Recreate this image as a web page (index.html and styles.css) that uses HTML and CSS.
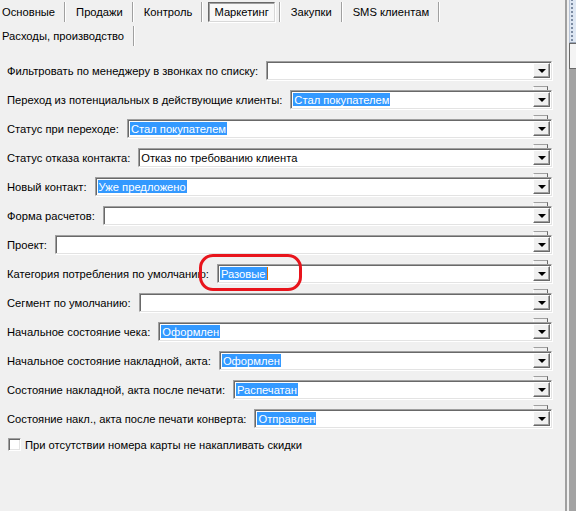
FILE: index.html
```html
<!DOCTYPE html>
<html lang="ru">
<head>
<meta charset="utf-8">
<title>Маркетинг</title>
<link rel="stylesheet" href="styles.css">
</head>
<body>
<div class="window">
  <div class="main">
    <div class="tabrow">
      <div class="tab first">Основные</div>
      <div class="tab">Продажи</div>
      <div class="tab">Контроль</div>
      <div class="tab active"><span class="tabbox">Маркетинг</span></div>
      <div class="tab">Закупки</div>
      <div class="tab">SMS клиентам</div>
    </div>
    <div class="tabrow">
      <div class="tab first">Расходы, производство</div>
    </div>

    <div class="form">
      <div class="row"><span class="label">Фильтровать по менеджеру в звонках по списку:</span><div class="combo nocap"><span class="val"></span><span class="btn"></span></div></div>
      <div class="row"><span class="label">Переход из потенциальных в действующие клиенты:</span><div class="combo"><span class="val sel">Стал покупателем</span><span class="btn"></span></div></div>
      <div class="row"><span class="label">Статус при переходе:</span><div class="combo"><span class="val sel">Стал покупателем</span><span class="btn"></span></div></div>
      <div class="row"><span class="label">Статус отказа контакта:</span><div class="combo"><span class="val">Отказ по требованию клиента</span><span class="btn"></span></div></div>
      <div class="row"><span class="label">Новый контакт:</span><div class="combo"><span class="val sel">Уже предложено</span><span class="btn"></span></div></div>
      <div class="row"><span class="label">Форма расчетов:</span><div class="combo"><span class="val"></span><span class="btn"></span></div></div>
      <div class="row"><span class="label">Проект:</span><div class="combo"><span class="val"></span><span class="btn"></span></div></div>
      <div class="row"><span class="label">Категория потребления по умолчанию:</span><div class="combo"><span class="val sel caret">Разовые</span><span class="btn"></span><span class="mark"></span></div></div>
      <div class="row"><span class="label">Сегмент по умолчанию:</span><div class="combo"><span class="val"></span><span class="btn"></span></div></div>
      <div class="row"><span class="label">Начальное состояние чека:</span><div class="combo"><span class="val sel">Оформлен</span><span class="btn"></span></div></div>
      <div class="row"><span class="label">Начальное состояние накладной, акта:</span><div class="combo"><span class="val sel">Оформлен</span><span class="btn"></span></div></div>
      <div class="row"><span class="label">Состояние накладной, акта после печати:</span><div class="combo"><span class="val sel">Распечатан</span><span class="btn"></span></div></div>
      <div class="row"><span class="label">Состояние накл., акта после печати конверта:</span><div class="combo"><span class="val sel">Отправлен</span><span class="btn"></span></div></div>
      <div class="check"><span class="box"></span><span class="label">При отсутствии номера карты не накапливать скидки</span></div>
    </div>
  </div>
  <div class="side">
    <div class="gap"></div>
    <div class="strip">
      <div class="grip"></div>
      <div class="knob"></div>
      <div class="rest"></div>
    </div>
  </div>
</div>
</body>
</html>
```
FILE: styles.css
```css
html, body {
  margin: 0;
  padding: 0;
  background: #f0f0f0;
}
body {
  font-family: "Liberation Sans", Arial, sans-serif;
  font-size: 11.2px;
  color: #000;
}
.window {
  display: flex;
  width: 576px;
  height: 511px;
  overflow: hidden;
}
.main {
  width: 565px;
  flex: none;
  position: relative;
}
.tabrow {
  display: flex;
  height: 24px;
}
.tab {
  display: flex;
  align-items: center;
  padding: 0 10px 0 11px;
  position: relative;
  white-space: nowrap;
}
.tab::after {
  content: "";
  position: absolute;
  right: 0;
  top: 2px;
  bottom: 2px;
  width: 1px;
  background: #a0a0a0;
  box-shadow: 1px 0 0 #fff;
}
.tab.first {
  padding-left: 2px;
}
.tab.active {
  padding: 0 5px 0 6px;
}
.tabbox {
  display: block;
  padding: 3px 5px 3px 5px;
  background: #f8f8f8;
  border-top: 1px solid #696969;
  border-left: 1px solid #696969;
  border-right: 1px solid #d8d8d8;
  border-bottom: 1px solid #d8d8d8;
  box-shadow: inset 1px 1px 0 #a0a0a0, 1px 1px 0 #fff;
}
.form {
  padding: 13px 13px 0 0;
}
.row {
  display: flex;
  align-items: center;
  height: 19px;
  margin-bottom: 10px;
}
.label {
  padding-left: 7px;
  white-space: nowrap;
  flex: none;
}
.combo {
  flex: 1;
  margin-left: 8px;
  height: 17px;
  background: #fff;
  border-top: 1px solid #a0a0a0;
  border-left: 1px solid #a0a0a0;
  border-right: 1px solid #e3e3e3;
  border-bottom: 1px solid #e3e3e3;
  box-shadow: inset 1px 1px 0 #696969, 1px 1px 0 #fff;
  display: flex;
  align-items: center;
  position: relative;
}
.combo::before {
  content: "";
  position: absolute;
  right: 3px;
  top: -5px;
  width: 13px;
  height: 3px;
  background: #f0f0f0;
  border-top: 1px solid #a0a0a0;
  border-left: 1px solid #fff;
  border-right: 1px solid #696969;
}
.combo.nocap::before {
  display: none;
}
.val {
  flex: 1;
  padding-left: 2px;
  display: flex;
  align-items: center;
  height: 13px;
  white-space: nowrap;
}
.val.sel {
  flex: none;
  background: #3399ff;
  color: #fff;
  margin-left: 2px;
  padding: 0 1px;
  margin-right: auto;
}
.val.caret {
  border-right: 1px solid #e07000;
}
.btn {
  width: 15px;
  height: 13px;
  margin: 0 1px 0 auto;
  background: #f0f0f0;
  border-top: 1px solid #fff;
  border-left: 1px solid #fff;
  border-right: 1px solid #696969;
  border-bottom: 1px solid #696969;
  box-shadow: inset -1px -1px 0 #a0a0a0;
  position: relative;
  flex: none;
}
.btn::after {
  content: "";
  position: absolute;
  left: 4px;
  top: 5px;
  width: 0;
  height: 0;
  border-left: 4px solid transparent;
  border-right: 4px solid transparent;
  border-top: 4px solid #000;
}
.mark {
  position: absolute;
  left: -19px;
  top: -11px;
  width: 97px;
  height: 31px;
  border: 3px solid #e8141c;
  border-radius: 14px;
}
.check {
  display: flex;
  align-items: center;
  height: 13px;
  padding-left: 8px;
  margin-top: 2px;
}
.box {
  width: 11px;
  height: 11px;
  background: #fff;
  border-top: 1px solid #a0a0a0;
  border-left: 1px solid #a0a0a0;
  border-right: 1px solid #fff;
  border-bottom: 1px solid #fff;
  box-shadow: inset 1px 1px 0 #696969, inset -1px -1px 0 #e3e3e3;
  flex: none;
}
.check .label {
  padding-left: 4px;
}
.side {
  flex: 1;
  display: flex;
  border-left: 2px solid #a0a0a0;
  height: 511px;
}
.gap {
  width: 2px;
  background: #f0f0f0;
}
.strip {
  flex: 1;
  display: flex;
  flex-direction: column;
}
.grip {
  height: 42px;
  background: #dde6f2;
  border-left: 1px solid #b8c4d6;
  background-image: radial-gradient(circle, #7a8aa0 0.7px, transparent 1px);
  background-size: 4px 4px;
  background-position: 0 14px;
  background-repeat: repeat-y;
  border-bottom: 1px solid #9aa6b8;
}
.knob {
  height: 24px;
  background: #f4f4f4;
  border: 1px solid #696969;
  border-right: none;
}
.rest {
  flex: 1;
  background: #a3a3a3;
}
```
